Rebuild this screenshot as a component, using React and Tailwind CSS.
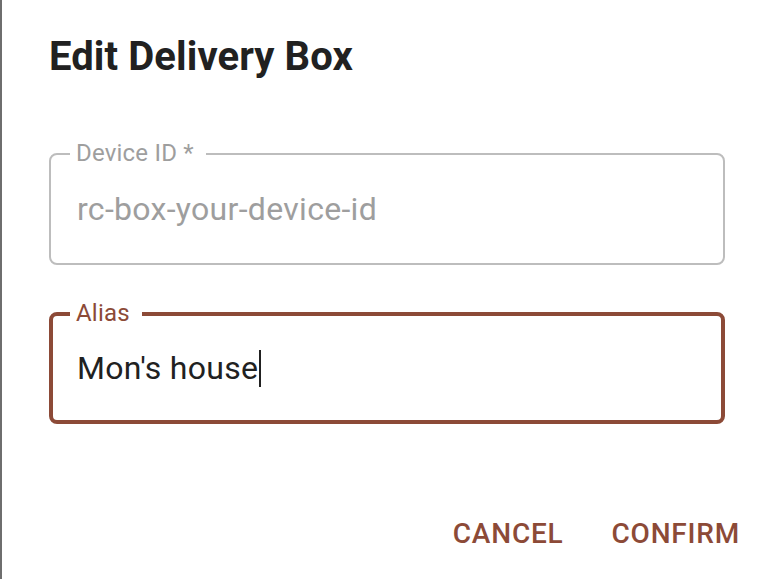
import React from 'react'

const brown = 'text-[#8c4a37]'

function OutlinedField({ label, value, focused, disabled }) {
  return (
    <div
      className={
        focused
          ? 'relative box-border h-[112px] flex items-center rounded-[8px] border-4 border-[#8c4a37] pl-[24px]'
          : 'relative box-border h-[112px] flex items-center rounded-[8px] border-2 border-[#bdbdbd] pl-[26px]'
      }
    >
      {/* floating label sitting in the notch */}
      <span
        className={
          focused
            ? 'absolute left-[17px] top-[-15px] bg-white pl-[6px] pr-[12px] text-[24px] leading-[24px] tracking-[0.2px] text-[#8c4a37]'
            : 'absolute left-[19px] top-[-14px] bg-white pl-[6px] pr-[12px] text-[24px] leading-[24px] tracking-[0.2px] text-[#9e9e9e]'
        }
      >
        {label}
      </span>
      <span
        className={
          disabled
            ? 'text-[32px] leading-[38px] tracking-[0.3px] text-[#9e9e9e]'
            : 'text-[32px] leading-[38px] tracking-[0.3px] text-[#212121] flex items-center'
        }
      >
        {value}
        {focused && <span className="inline-block w-[2px] h-[37px] bg-[#212121] ml-[1px]" />}
      </span>
    </div>
  )
}

export default function App() {
  return (
    <div className="w-[772px] h-[579px] bg-white flex font-['Roboto',sans-serif] overflow-hidden">
      <div className="w-[2px] h-full bg-[#6e6e6e] shrink-0" />
      <div className="flex-1 flex flex-col">
        <div className="pl-[45px] pr-[47px]">
          <h2 className="pl-[2px] pt-[25px] text-[40px] leading-[64px] font-bold text-[#212121] tracking-[0.1px]">
            Edit Delivery Box
          </h2>
          <div className="ml-[2px] mt-[64px]">
            <OutlinedField label="Device ID *" value="rc-box-your-device-id" disabled />
          </div>
          <div className="ml-[2px] mt-[47px]">
            <OutlinedField label="Alias" value="Mon's house" focused />
          </div>
        </div>
        <div className="mt-[73px] flex justify-end gap-[16px] pr-[16px]">
          <button className={`px-[16px] py-[12px] text-[28px] leading-[49px] font-medium uppercase tracking-[0.8px] ${brown}`}>
            Cancel
          </button>
          <button className={`px-[16px] py-[12px] text-[28px] leading-[49px] font-medium uppercase tracking-[0.8px] ${brown}`}>
            Confirm
          </button>
        </div>
      </div>
    </div>
  )
}
